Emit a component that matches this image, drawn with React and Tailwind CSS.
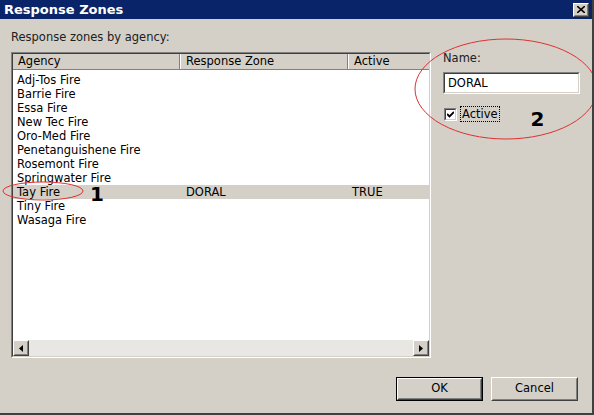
import React from "react";

const agencies = [
  { name: "Adj-Tos Fire" },
  { name: "Barrie Fire" },
  { name: "Essa Fire" },
  { name: "New Tec Fire" },
  { name: "Oro-Med Fire" },
  { name: "Penetanguishene Fire" },
  { name: "Rosemont Fire" },
  { name: "Springwater Fire" },
  { name: "Tay Fire", zone: "DORAL", active: "TRUE", selected: true },
  { name: "Tiny Fire" },
  { name: "Wasaga Fire" },
];

const font = { fontFamily: '"DejaVu Sans", Verdana, sans-serif' };

const Raised = ({ className = "", children }) => (
  <div
    className={`border border-t-white border-l-white border-r-[#404040] border-b-[#404040] bg-[#d4d0c8] ${className}`}
  >
    <div className="w-full h-full border border-transparent border-r-[#808080] border-b-[#808080] flex items-center justify-center">
      {children}
    </div>
  </div>
);

const App = () => {
  return (
    <div
      className="relative w-[594px] h-[415px] bg-[#d4d0c8] text-[11.5px] text-black flex flex-col overflow-hidden border-r-2 border-b-2 border-r-[#404040] border-b-[#404040]"
      style={font}
    >
      {/* title bar */}
      <div className="h-[19px] bg-[#0a246a] flex items-center justify-between pl-[4px] pr-[3px] shrink-0">
        <span className="text-white font-bold text-[13px] leading-none">Response Zones</span>
        <Raised className="w-[16px] h-[14px]">
          <svg width="8" height="7" viewBox="0 0 8 7">
            <path d="M0 0L8 7M8 0L0 7" stroke="black" strokeWidth="1.6" />
          </svg>
        </Raised>
      </div>

      <div className="flex-1 flex pl-[11px] pr-[12px] pt-[11px]">
        {/* left */}
        <div className="w-[420px] flex flex-col">
          <div className="h-[15px] leading-[15px] text-[#202020]">Response zones by agency:</div>
          <div className="mt-[7px] h-[306px] border border-t-[#808080] border-l-[#808080] border-r-white border-b-white">
            <div className="w-full h-full border border-t-[#404040] border-l-[#404040] border-r-[#d4d0c8] border-b-[#d4d0c8] bg-white flex flex-col">
              {/* header */}
              <div className="h-[16px] flex bg-[#d4d0c8] border-b border-b-[#808080] shrink-0">
                <div className="w-[167px] pl-[5px] leading-[15px] border-r border-r-[#808080] shadow-[1px_0_0_white]">Agency</div>
                <div className="w-[167px] pl-[5px] leading-[15px] border-r border-r-[#808080] shadow-[1px_0_0_white] ml-px">Response Zone</div>
                <div className="flex-1 pl-[5px] leading-[15px] ml-px">Active</div>
              </div>
              {/* rows */}
              <div className="flex-1 pt-[3px]">
                {agencies.map((a) => (
                  <div
                    key={a.name}
                    className={`h-[14px] leading-[14px] flex ${a.selected ? "bg-[#d4d0c8]" : ""}`}
                  >
                    <div className="w-[169px] pl-[4px]">{a.name}</div>
                    <div className="w-[166px] pl-[4px]">{a.zone}</div>
                    <div className="flex-1 pl-[4px]">{a.active}</div>
                  </div>
                ))}
              </div>
              {/* scrollbar */}
              <div className="h-[16px] flex bg-[#e9e7e3] shrink-0">
                <Raised className="w-[16px] h-[16px]">
                  <svg width="4" height="7" viewBox="0 0 4 7">
                    <path d="M4 0V7L0 3.5Z" fill="black" />
                  </svg>
                </Raised>
                <div className="flex-1" />
                <Raised className="w-[16px] h-[16px]">
                  <svg width="4" height="7" viewBox="0 0 4 7">
                    <path d="M0 0V7L4 3.5Z" fill="black" />
                  </svg>
                </Raised>
              </div>
            </div>
          </div>
        </div>

        {/* right */}
        <div className="flex-1 pl-[12px] flex flex-col">
          <div className="h-[15px] leading-[15px] mt-[21px] text-[#202020]">Name:</div>
          <div className="mt-[6px] w-[137px] h-[22px] border border-t-[#808080] border-l-[#808080] border-r-white border-b-white">
            <div className="w-full h-full border border-t-[#404040] border-l-[#404040] border-r-[#d4d0c8] border-b-[#d4d0c8] bg-white pl-[3px] leading-[18px]">
              DORAL
            </div>
          </div>
          <div className="mt-[10px] flex items-center">
            <div className="ml-px w-[13px] h-[13px] border border-t-[#808080] border-l-[#808080] border-r-white border-b-white">
              <div className="w-full h-full border border-t-[#404040] border-l-[#404040] border-r-[#d4d0c8] border-b-[#d4d0c8] bg-white flex items-center justify-center">
                <svg width="7" height="7" viewBox="0 0 7 7">
                  <path d="M0 3L2.5 5.5L7 1" stroke="black" strokeWidth="1.8" fill="none" />
                </svg>
              </div>
            </div>
            <span className="ml-[4px] px-px leading-[14px] outline-1 outline-dotted outline-black">Active</span>
            <span className="relative top-[5px] ml-[32px] text-[20px] font-bold leading-none">2</span>
          </div>
        </div>
      </div>

      {/* buttons */}
      <div className="h-[36px] flex justify-end gap-[8px] pr-[14px] pb-[12px] shrink-0">
        <div className="w-[87px] h-[24px] border border-black">
          <Raised className="w-full h-full">OK</Raised>
        </div>
        <Raised className="w-[87px] h-[24px]">Cancel</Raised>
      </div>

      {/* annotations */}
      <span className="absolute left-[90px] top-[187px] text-[20px] font-bold leading-[14px]">1</span>
      <svg className="absolute left-0 top-0 pointer-events-none" width="594" height="415">
        <ellipse cx="43" cy="191" rx="40" ry="9" fill="none" stroke="#e03030" strokeWidth="1" />
        <ellipse cx="506" cy="89" rx="91" ry="50" fill="none" stroke="#e03030" strokeWidth="1" />
      </svg>
    </div>
  );
};

export default App;
